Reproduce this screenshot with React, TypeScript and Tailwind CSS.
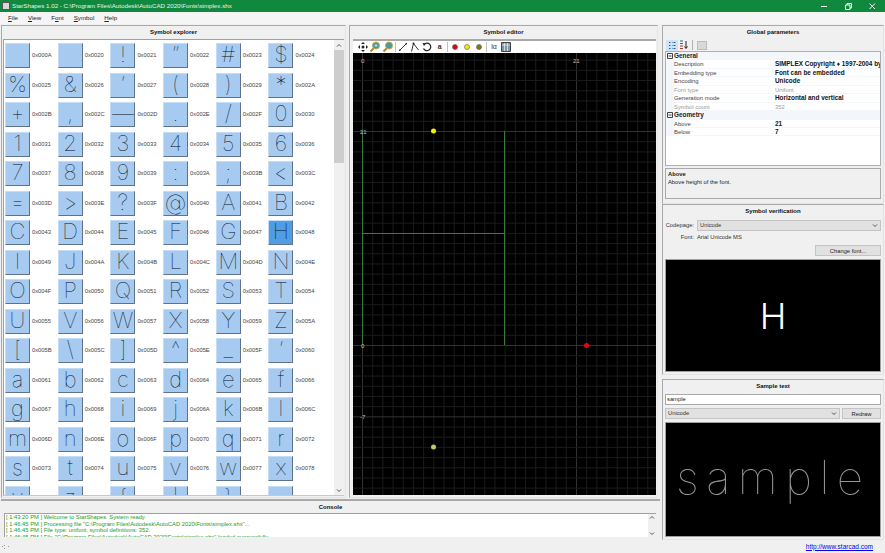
import type { ReactNode } from "react";

const FONT = "font-['Liberation_Sans',Arial,sans-serif]";

const GLYPHS = [
  "", "", "!", "”", "#", "$",
  "%", "&", "’", "(", ")", "*",
  "+", ",", "—", ".", "/", "0",
  "1", "2", "3", "4", "5", "6",
  "7", "8", "9", ":", ";", "<",
  "=", ">", "?", "@", "A", "B",
  "C", "D", "E", "F", "G", "H",
  "I", "J", "K", "L", "M", "N",
  "O", "P", "Q", "R", "S", "T",
  "U", "V", "W", "X", "Y", "Z",
  "[", "\\", "]", "^", "_", "‘",
  "a", "b", "c", "d", "e", "f",
  "g", "h", "i", "j", "k", "l",
  "m", "n", "o", "p", "q", "r",
  "s", "t", "u", "v", "w", "x",
  "y", "z", "{", "|", "}", "",
];

function codeOf(index: number) {
  const code = index === 0 ? 0x0a : 0x1f + index;
  return "0x" + code.toString(16).toUpperCase().padStart(4, "0");
}

const PROPS = [
  { name: "Description", value: "SIMPLEX Copyright ♦ 1997-2004 by", bold: true },
  { name: "Embedding type", value: "Font can be embedded", bold: true },
  { name: "Encoding", value: "Unicode", bold: true },
  { name: "Font type", value: "Unifont", muted: true },
  { name: "Generation mode", value: "Horizontal and vertical", bold: true },
  { name: "Symbol count", value: "352", muted: true },
];

const LOG = [
  "[ 1:43:20 PM ] Welcome to StarShapes. System ready.",
  '[ 1:46:45 PM ] Processing file "C:\\Program Files\\Autodesk\\AutoCAD 2020\\Fonts\\simplex.shx"...',
  "[ 1:46:45 PM ] File type: unifont, symbol definitions: 352.",
  '[ 1:46:45 PM ] File "C:\\Program Files\\Autodesk\\AutoCAD 2020\\Fonts\\simplex.shx" loaded successfully.',
];

function PanelTitle({ children }: { children: ReactNode }) {
  return (
    <div className="h-[13px] leading-[13px] text-center text-[6px] font-bold text-[#111] shrink-0">
      {children}
    </div>
  );
}

function Panel({ className, children }: { className: string; children: ReactNode }) {
  return (
    <div className={"flex flex-col border border-[#a9a9a9] border-r-[#e4e4e4] border-b-[#e4e4e4] bg-[#f0f0f0] " + className}>
      {children}
    </div>
  );
}

function Chevron({ up }: { up?: boolean }) {
  return (
    <svg width="6" height="5" viewBox="0 0 6 5" className="shrink-0">
      <path d={up ? "M1 3.5 3 1.5 5 3.5" : "M1 1.5 3 3.5 5 1.5"} fill="none" stroke="#555" strokeWidth="1" />
    </svg>
  );
}

function SymbolCell({ index, glyph }: { index: number; glyph: string }) {
  const selected = glyph === "H";
  return (
    <div className="flex items-center w-[52.7px] h-[29.5px]">
      <div
        className={
          "w-[25px] h-[25px] shrink-0 flex justify-center overflow-hidden border border-t-[#c4dcf6] border-l-[#c4dcf6] border-r-[#5f7288] border-b-[#5f7288] font-['Inter',sans-serif] font-thin text-[22px] leading-[20px] text-[#050d18] " +
          (selected ? "bg-[#4f9de4]" : "bg-[#a6caf0]")
        }
      >
        {glyph}
      </div>
      <span className="ml-[2px] text-[5.8px] text-[#444]">{codeOf(index)}</span>
    </div>
  );
}

function SymbolExplorer() {
  return (
    <Panel className="w-[345px] h-[473px]">
      <PanelTitle>Symbol explorer</PanelTitle>
      <div className="flex-1 min-h-0 mx-[1px] mb-[1px] flex border border-[#a0a0a0] border-r-0 border-b-[#c8c8c8] bg-white overflow-hidden">
        <div className="w-[331px] pl-[1px] pt-[1px] flex flex-wrap content-start">
          {GLYPHS.map((glyph, i) => (
            <SymbolCell key={i} index={i} glyph={glyph} />
          ))}
        </div>
        <div className="w-[10px] ml-auto bg-[#f0f0f0] flex flex-col items-center">
          <div className="h-[10px] flex items-center">
            <Chevron up />
          </div>
          <div className="w-full h-[113px] bg-[#cdcdcd]" />
          <div className="mt-auto h-[9px] flex items-center">
            <Chevron />
          </div>
        </div>
      </div>
    </Panel>
  );
}

function Sep() {
  return <div className="w-px h-[10px] bg-[#c0c0c0] mx-[0.5px] shrink-0" />;
}

function Tool({ children }: { children: ReactNode }) {
  return (
    <svg width="12" height="12" viewBox="0 0 12 12" className="shrink-0">
      {children}
    </svg>
  );
}

function Magnifier({ plus }: { plus?: boolean }) {
  return (
    <Tool>
      <path d="M5 7 1.5 10.5" stroke="#b8862a" strokeWidth="2" />
      <circle cx="7" cy="4.500" r="3.500" fill="#3f9fa8" stroke="#c9a24a" strokeWidth="1" />
      {plus && <path d="M5.500 4.500h3M7 3v3" stroke="#d7f0f0" strokeWidth=".7" />}
    </Tool>
  );
}

function Dot({ color }: { color: string }) {
  return (
    <Tool>
      <circle cx="6" cy="6" r="2.500" fill={color} stroke="#666" strokeWidth=".7" />
    </Tool>
  );
}

function EditorToolbar() {
  return (
    <div className="h-[12px] shrink-0 bg-white flex items-center pl-[4px] gap-[0.4px]">
      <Tool>
        <path d="M6 1 8 3H4zM6 11 4 9h4zM1 6l2-2v4zM11 6 9 8V4z" fill="#222" />
        <circle cx="6" cy="6" r="1.500" fill="#222" />
      </Tool>
      <Magnifier plus />
      <Magnifier />
      <Sep />
      <Tool>
        <path d="M3 9 9 3" stroke="#333" strokeWidth="1" />
        <path d="M2 8.500h1.500V10H2zM8.500 2H10v1.500H8.500z" fill="#333" />
      </Tool>
      <Tool>
        <path d="M2.500 10.500 4.500 2.500 9.500 9" fill="none" stroke="#333" strokeWidth="1" />
        <circle cx="4.500" cy="2.500" r="1" fill="#222" />
      </Tool>
      <Tool>
        <path d="M3 3.500A3.800 3.800 0 1 1 2.500 7.500" fill="none" stroke="#222" strokeWidth="1.200" />
        <path d="M1.500 2 5 2.500 3 5z" fill="#222" />
      </Tool>
      <div className="w-[12px] shrink-0 text-center text-[7px] font-bold leading-[12px] text-[#333]">a</div>
      <Sep />
      <Dot color="#e60000" />
      <Dot color="#f2ee00" />
      <Dot color="#7c7c10" />
      <Sep />
      <div className="w-[12px] shrink-0 text-center text-[7px] leading-[12px] text-[#333]">lα</div>
      <Tool>
        <path d="M1.500 1.500h9v9h-9z" fill="#7c97a8" stroke="#444" strokeWidth="1" />
        <path d="M4.500 2v8M7.500 2v8M2 4h8" stroke="#e8eef2" strokeWidth=".8" />
      </Tool>
    </div>
  );
}

function EditorCanvas() {
  // canvas is 303x442, origin of the font at 9,292, one unit is 10.19px
  const unit = 10.19;
  const ox = 9.5;
  const oy = 292.5;
  const cols = Array.from({ length: 30 }, (_, i) => i);
  const rows = Array.from({ length: 44 }, (_, i) => i - 14);
  return (
    <svg width="303" height="442" viewBox="0 0 303 442" className="block bg-black">
      {cols.map((i) => (
        <line key={i} x1={ox + i * unit} x2={ox + i * unit} y1="0" y2="442" stroke={i === 0 || i === 21 ? "#333333" : "#1b1b1b"} />
      ))}
      {rows.map((j) => (
        <line key={j} x1="0" x2="303" y1={oy - j * unit} y2={oy - j * unit} stroke={j === 0 || j === 21 || j === -7 ? "#333333" : "#1b1b1b"} />
      ))}
      <path d="M9.500 78v214M151.500 78v214M9.500 180.500h142" fill="none" stroke="#3a7a3a" strokeWidth="1" />
      <circle cx="80.500" cy="78" r="2.500" fill="#f4f000" />
      <circle cx="233.500" cy="292.500" r="2.500" fill="#f00000" />
      <circle cx="80.500" cy="394" r="2.500" fill="#c8c46a" />
      <g fontSize="6" fill="#c0c0c0" fontFamily="Liberation Sans, Arial, sans-serif">
        <text x="8" y="10">0</text>
        <text x="220" y="10">21</text>
        <text x="7" y="81">21</text>
        <text x="8" y="295">0</text>
        <text x="7" y="366">-7</text>
      </g>
    </svg>
  );
}

function SymbolEditor() {
  return (
    <Panel className="w-[309px] h-[473px] ml-[3px]">
      <PanelTitle>Symbol editor</PanelTitle>
      <div className="ml-[3px] mr-[1px] border-t-2 border-[#a9a9a9]">
        <EditorToolbar />
        <EditorCanvas />
      </div>
    </Panel>
  );
}

function Console() {
  return (
    <div className="h-[41px] mt-[1px] border-t-2 border-[#a9a9a9] bg-[#f0f0f0] flex flex-col overflow-hidden">
      <div className="h-[12px] leading-[12px] text-center text-[6px] font-bold text-[#111] shrink-0">Console</div>
      <div className="h-[24px] ml-[3px] mr-[4px] flex bg-white border-t border-l border-[#a0a0a0] overflow-hidden">
        <div className="flex-1 pl-[1px] text-[5.8px] leading-[6.7px] text-[#1d9a2a] whitespace-nowrap overflow-hidden">
          {LOG.map((line) => (
            <div key={line}>{line}</div>
          ))}
        </div>
        <div className="w-[8px] bg-[#f0f0f0] flex flex-col items-center justify-between py-[1px]">
          <Chevron up />
          <Chevron />
        </div>
      </div>
    </div>
  );
}

function PropRow({ name, value, bold, muted }: { name: string; value: string; bold?: boolean; muted?: boolean }) {
  return (
    <div className="flex h-[8.45px] leading-[8.45px] whitespace-nowrap overflow-hidden">
      <div className="w-[8px] bg-[#f3f6fb] shrink-0" />
      <div className={"w-[101px] shrink-0 border-b border-[#f3f6fb] text-[5.9px] " + (muted ? "text-[#9a9a9a]" : "text-[#444]")}>{name}</div>
      <div className={"flex-1 border-b border-[#f3f6fb] " + (muted ? "text-[#9a9a9a] text-[5.9px] " : "text-[#111] ") + (bold ? "font-bold" : "")}>{value}</div>
    </div>
  );
}

function PropCategory({ name }: { name: string }) {
  return (
    <div className="flex items-center h-[8.45px] bg-[#f3f6fb] font-bold text-[#222]">
      <div className="w-[8px] flex justify-center">
        <svg width="6" height="6" viewBox="0 0 6 6">
          <path d="M.5.5h5v5h-5zM1.500 3h3" fill="none" stroke="#444" strokeWidth="1" />
        </svg>
      </div>
      {name}
    </div>
  );
}

function GlobalParameters() {
  return (
    <Panel className="h-[179px] shrink-0">
      <PanelTitle>Global parameters</PanelTitle>
      <div className="h-[12px] flex items-center pl-[3px]">
        <div className="w-[12px] h-[11px] bg-[#cce4f7] flex items-center justify-center">
          <svg width="9" height="9" viewBox="0 0 9 9">
            <path d="M1 1.500h2M1 4.500h2M1 7.500h2M4.500 1.500h3.500M4.500 4.500h3.500M4.500 7.500h3.500" stroke="#3a5a78" strokeWidth="1.200" strokeDasharray="1 .5" />
          </svg>
        </div>
        <div className="w-[12px] h-[11px] flex items-center justify-center">
          <svg width="10" height="10" viewBox="0 0 10 10">
            <path d="M1 1h3M1 3.500h3" stroke="#2b5fb0" strokeWidth="1" />
            <path d="M1 6h3M1 8.500h3" stroke="#b03030" strokeWidth="1" />
            <path d="M7 1v7M5.500 6.500 7 8.500 8.500 6.500" fill="none" stroke="#222" strokeWidth="1" />
          </svg>
        </div>
        <div className="w-px h-[10px] bg-[#b0b0b0] mx-[2px]" />
        <div className="w-[10px] h-[9px] ml-[2px] bg-[#d8d8d8] border border-[#bdbdbd]" />
      </div>
      <div className="mx-[2px] h-[115px] bg-white border border-[#a9b0b8] text-[6.4px] overflow-hidden">
        <PropCategory name="General" />
        {PROPS.map((p) => (
          <PropRow key={p.name} {...p} />
        ))}
        <PropCategory name="Geometry" />
        <PropRow name="Above" value="21" bold />
        <PropRow name="Below" value="7" bold />
      </div>
      <div className="mx-[2px] mt-[2px] h-[31px] border border-[#a9a9a9] bg-[#f0f0f0] px-[2px] pt-[1px] text-[5.8px] leading-[8px] text-[#222]">
        <div className="font-bold">Above</div>
        <div>Above height of the font.</div>
      </div>
    </Panel>
  );
}

function Combo({ label, className }: { label: string; className: string }) {
  return (
    <div className={"h-[11px] flex items-center justify-between bg-[#e1e1e1] border border-[#c4c4c4] px-[2px] text-[5.8px] text-[#333] " + className}>
      {label}
      <Chevron />
    </div>
  );
}

function SymbolVerification() {
  return (
    <Panel className="h-[171px] shrink-0">
      <PanelTitle>Symbol verification</PanelTitle>
      <div className="flex items-center h-[12px] mt-[1px] text-[5.8px] text-[#333]">
        <div className="w-[31px] text-right shrink-0">Codepage:</div>
        <Combo label="Unicode" className="ml-[3px] flex-1 mr-[2px]" />
      </div>
      <div className="flex items-center h-[13px] text-[5.8px] text-[#333]">
        <div className="w-[31px] text-right shrink-0">Font:</div>
        <div className="ml-[3px]">Arial Unicode MS</div>
      </div>
      <div className="flex justify-end pr-[2px] mt-[1px]">
        <div className="w-[66px] h-[11px] leading-[10px] text-center bg-[#e1e1e1] border border-[#c4c4c4] text-[5.8px] text-[#222]">Change font...</div>
      </div>
      <div className="mt-[3px] mx-[2px] h-[113px] bg-black border border-[#a0a0a0] flex items-center justify-center font-['Inter',sans-serif] font-light text-[36px] text-white">
        H
      </div>
    </Panel>
  );
}

function SampleText() {
  return (
    <Panel className="flex-1 min-h-0 mt-[4px]">
      <PanelTitle>Sample text</PanelTitle>
      <div className="mx-[2px] mt-[1px] h-[11px] bg-white border border-[#a9a9a9] leading-[9px] px-[1px] text-[5.8px] text-[#222] shrink-0">
        sample
      </div>
      <div className="mx-[2px] mt-[3px] flex gap-[2px] shrink-0">
        <Combo label="Unicode" className="flex-1" />
        <div className="w-[39px] h-[11px] leading-[10px] text-center bg-[#e1e1e1] border border-[#c4c4c4] text-[5.8px] text-[#222]">Redraw</div>
      </div>
      <div className="mx-[2px] mt-[3px] h-[115px] bg-black border border-[#a0a0a0] flex items-center justify-center pb-[5px] font-['Inter',sans-serif] font-thin text-[46px] tracking-[7.5px] text-[#969696]">
        <span className="[will-change:transform]">sample</span>
      </div>
    </Panel>
  );
}

export default function App() {
  return (
    <div className={"w-[885px] h-[553px] flex flex-col overflow-hidden bg-[#f0f0f0] " + FONT}>
      <div className="h-[12px] shrink-0 bg-[#10893e] flex items-center text-[6.2px] text-[#e8f3ec]">
        <div className="w-[8px] h-[8px] ml-[2px] mr-[2px] bg-[#d8d8d8] border border-[#555]" />
        <span className="whitespace-nowrap">StarShapes 1.02 - C:\Program Files\Autodesk\AutoCAD 2020\Fonts\simplex.shx</span>
        <div className="ml-auto flex items-center gap-[17px] pr-[9px]">
          <svg width="7" height="7" viewBox="0 0 7 7">
            <path d="M0 3.500h6" stroke="#fff" strokeWidth="1" />
          </svg>
          <svg width="7" height="7" viewBox="0 0 7 7">
            <path d="M.5 2h4.500v4.500H.5zM2 2V.5h4.500V5H5" fill="none" stroke="#fff" strokeWidth="1" />
          </svg>
          <svg width="7" height="7" viewBox="0 0 7 7">
            <path d="M.5.5l5.500 5.500M6 .5.500 6" stroke="#fff" strokeWidth="1" />
          </svg>
        </div>
      </div>

      <div className="h-[12px] shrink-0 bg-[#f5f5f5] flex items-center text-[6.2px] text-[#222] pl-[8px] gap-[10px]">
        <span><u>F</u>ile</span>
        <span><u>V</u>iew</span>
        <span>F<u>o</u>nt</span>
        <span><u>S</u>ymbol</span>
        <span><u>H</u>elp</span>
      </div>

      <div className="flex-1 min-h-0 flex pt-[1px]">
        <div className="w-[660px] shrink-0 flex flex-col pl-[1px]">
          <div className="flex">
            <SymbolExplorer />
            <SymbolEditor />
          </div>
          <Console />
        </div>
        <div className="flex-1 min-w-0 flex flex-col pl-[2px] pr-[1px]">
          <GlobalParameters />
          <SymbolVerification />
          <SampleText />
        </div>
      </div>

      <div className="h-[13px] shrink-0 flex items-center justify-between pl-[2px] pr-[12px] bg-[#f0f0f0]">
        <svg width="8" height="6" viewBox="0 0 8 6">
          <path d="M0 2h1v1H0zM2 1h1v1H2zM2 4h1v1H2zM6 2h1v1H6z" fill="#999" />
        </svg>
        <a className="text-[6.5px] text-[#0000f0] underline">http://www.starcad.com</a>
      </div>
    </div>
  );
}
